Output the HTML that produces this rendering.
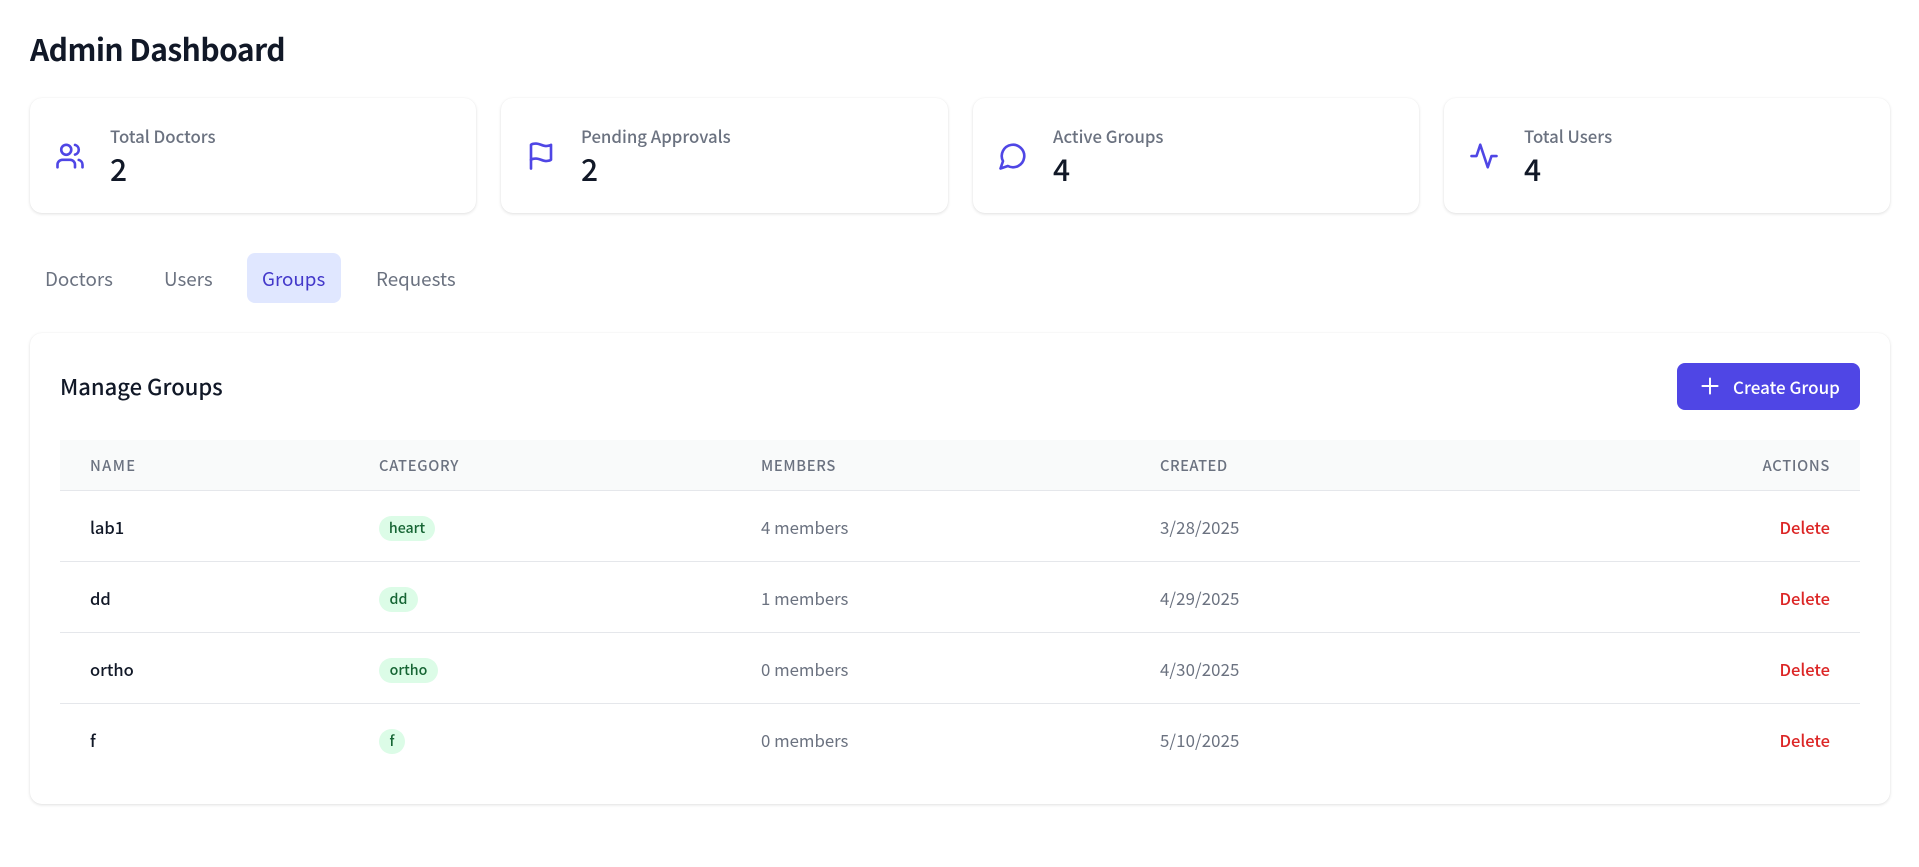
<!DOCTYPE html>
<html><head><meta charset="utf-8"><title>Admin Dashboard</title>
<style>
*{box-sizing:border-box}
html,body{margin:0;padding:0;background:#fff;width:1919px;height:867px;overflow:hidden}
body{position:relative;font-family:"Noto Sans CJK JP","Liberation Sans",sans-serif;color:#111827}
.t{position:absolute;white-space:nowrap;line-height:30px;height:30px}
.r{transform:translateX(-100%)}
.card{position:absolute;background:#fff;border-radius:12px;box-shadow:0 1px 3px rgba(0,0,0,.12),0 0 1px rgba(0,0,0,.06)}
svg{position:absolute;fill:none;stroke-linecap:round;stroke-linejoin:round}
.ic{width:30px;height:30px;top:141px;stroke:#4f46e5;stroke-width:2.1}
.lab{top:121px;font-size:16.8px;font-weight:500;color:#6b7280}
.num{top:153px;font-size:30px;font-weight:500;color:#111827}
.tab{top:264px;font-size:18.8px;color:#6b7280}
.th{top:450.5px;font-size:14.7px;font-weight:500;letter-spacing:.7px;color:#6b7280}
.nm{font-size:16.5px;font-weight:500;color:#111827}
.mu{font-size:16.8px;color:#6b7280}
.dt{font-size:16.8px;letter-spacing:.12px;color:#6b7280}
.del{font-size:16.5px;font-weight:500;color:#dc2626}
.b{position:absolute;height:25px;line-height:25px;border-radius:13px;background:#dcfce7;color:#166534;font-size:14.2px;font-weight:500;text-align:center;white-space:nowrap}
.ln{position:absolute;left:60px;width:1800px;height:1px;background:#e5e7eb}
</style></head><body>
<div class="t" style="left:30px;top:33px;font-size:30px;font-weight:700;letter-spacing:-.55px;color:#111827">Admin Dashboard</div>

<div class="card" style="left:30px;top:98px;width:446px;height:115px"></div>
<div class="card" style="left:501px;top:98px;width:447px;height:115px"></div>
<div class="card" style="left:973px;top:98px;width:446px;height:115px"></div>
<div class="card" style="left:1444px;top:98px;width:446px;height:115px"></div>

<svg class="ic" style="left:55px" viewBox="0 0 24 24"><path d="M16 21v-2a4 4 0 0 0-4-4H6a4 4 0 0 0-4 4v2"/><circle cx="9" cy="7" r="4"/><path d="M22 21v-2a4 4 0 0 0-3-3.87"/><path d="M16 3.13a4 4 0 0 1 0 7.75"/></svg>
<svg class="ic" style="left:526px" viewBox="0 0 24 24"><path d="M4 15s1-1 4-1 5 2 8 2 4-1 4-1V3s-1 1-4 1-5-2-8-2-4 1-4 1z"/><path d="M4 22v-7"/></svg>
<svg class="ic" style="left:998px" viewBox="0 0 24 24"><path d="M7.9 20A9 9 0 1 0 4 16.1L2 22Z"/></svg>
<svg class="ic" style="left:1469px" viewBox="0 0 24 24"><path d="M22 12h-4l-3 9L9 3l-3 9H2"/></svg>

<div class="t lab" style="left:110px">Total Doctors</div><div class="t num" style="left:110px">2</div>
<div class="t lab" style="left:581px">Pending Approvals</div><div class="t num" style="left:581px">2</div>
<div class="t lab" style="left:1053px">Active Groups</div><div class="t num" style="left:1053px">4</div>
<div class="t lab" style="left:1524px">Total Users</div><div class="t num" style="left:1524px">4</div>

<div style="position:absolute;left:247px;top:253px;width:94px;height:50px;background:#e0e7ff;border-radius:8px"></div>
<div class="t tab" style="left:45px">Doctors</div>
<div class="t tab" style="left:164px">Users</div>
<div class="t tab" style="left:262px;color:#4338ca">Groups</div>
<div class="t tab" style="left:376px">Requests</div>

<div class="card" style="left:30px;top:333px;width:1860px;height:471px"></div>
<div class="t" style="left:60px;top:371px;font-size:22px;font-weight:500;color:#111827">Manage Groups</div>
<div style="position:absolute;left:1677px;top:363px;width:183px;height:47px;background:#4f46e5;border-radius:8px"></div>
<svg style="left:1697px;top:373px;width:26px;height:26px;stroke:#fff;stroke-width:1.8" viewBox="0 0 24 24"><path d="M5 12h14M12 5v14"/></svg>
<div class="t" style="left:1733px;top:372px;font-size:17px;font-weight:500;color:#fff">Create Group</div>

<div style="position:absolute;left:60px;top:440px;width:1800px;height:50px;background:#f9fafa"></div>
<div class="ln" style="top:490px"></div>
<div class="ln" style="top:561px"></div>
<div class="ln" style="top:632px"></div>
<div class="ln" style="top:703px"></div>

<div class="t th" style="left:90px;letter-spacing:1.4px">NAME</div>
<div class="t th" style="left:379px">CATEGORY</div>
<div class="t th" style="left:761px">MEMBERS</div>
<div class="t th" style="left:1160px;letter-spacing:.5px">CREATED</div>
<div class="t th r" style="left:1830px">ACTIONS</div>

<div class="t nm" style="left:90px;top:512px">lab1</div>
<div class="b" style="left:379px;top:516px;width:56px">heart</div>
<div class="t mu" style="left:761px;top:512px">4 members</div>
<div class="t dt" style="left:1160px;top:512px">3/28/2025</div>
<div class="t del r" style="left:1830px;top:512px">Delete</div>

<div class="t nm" style="left:90px;top:583px">dd</div>
<div class="b" style="left:379px;top:587px;width:39px">dd</div>
<div class="t mu" style="left:761px;top:583px">1 members</div>
<div class="t dt" style="left:1160px;top:583px">4/29/2025</div>
<div class="t del r" style="left:1830px;top:583px">Delete</div>

<div class="t nm" style="left:90px;top:654px">ortho</div>
<div class="b" style="left:379px;top:658px;width:59px">ortho</div>
<div class="t mu" style="left:761px;top:654px">0 members</div>
<div class="t dt" style="left:1160px;top:654px">4/30/2025</div>
<div class="t del r" style="left:1830px;top:654px">Delete</div>

<div class="t nm" style="left:90px;top:725px">f</div>
<div class="b" style="left:379px;top:729px;width:26px">f</div>
<div class="t mu" style="left:761px;top:725px">0 members</div>
<div class="t dt" style="left:1160px;top:725px">5/10/2025</div>
<div class="t del r" style="left:1830px;top:725px">Delete</div>
</body></html>
